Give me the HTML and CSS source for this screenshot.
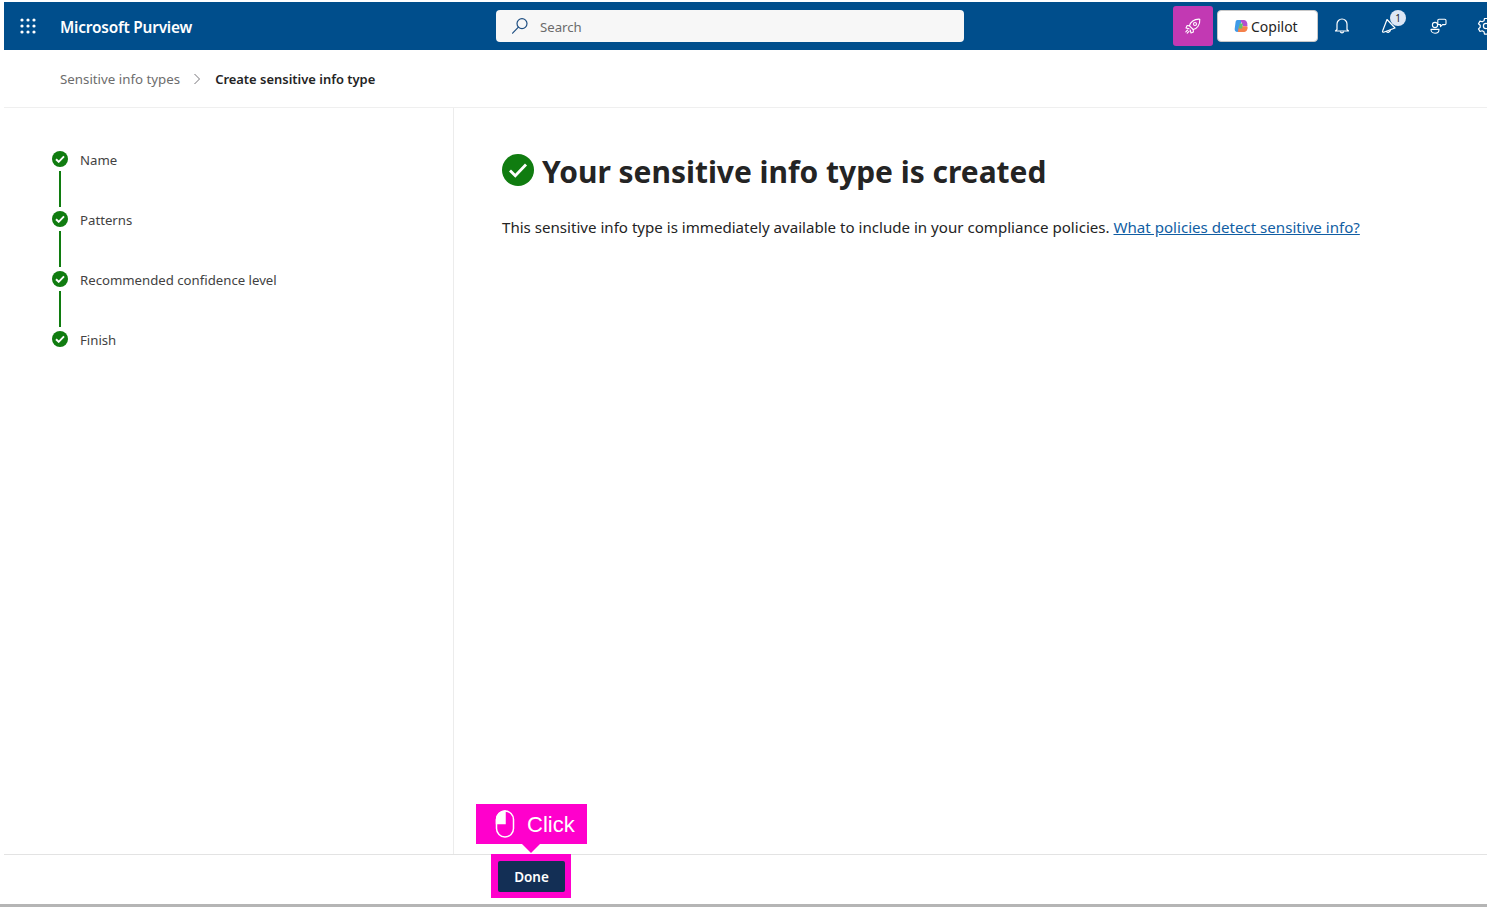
FILE: index.html
```html
<!DOCTYPE html>
<html>

<head>
    <meta charset='utf-8'>
    <title>Microsoft Purview</title>
    <link rel="stylesheet" href="styles.css">
</head>

<body>
    <div id="page">
        <header class="topbar">
            <div class="brand">
                <svg class="waffle" width="16" height="16" viewBox="0 0 16 16" fill="#fff">
                    <circle cx="2" cy="2" r="1.6" /><circle cx="8" cy="2" r="1.6" /><circle cx="14" cy="2" r="1.6" />
                    <circle cx="2" cy="8" r="1.6" /><circle cx="8" cy="8" r="1.6" /><circle cx="14" cy="8" r="1.6" />
                    <circle cx="2" cy="14" r="1.6" /><circle cx="8" cy="14" r="1.6" /><circle cx="14" cy="14" r="1.6" />
                </svg>
                <span class="brand_name">Microsoft Purview</span>
            </div>
            <div class="search">
                <svg width="18" height="18" viewBox="0 0 18 18" fill="none" stroke="#1f4f82" stroke-width="1.2">
                    <circle cx="11" cy="6.6" r="5" />
                    <path d="M7.4 10.2 1.6 16.2" stroke-linecap="round" />
                </svg>
                <span class="search_text">Search</span>
            </div>
            <div class="actions">
                <div class="rocket">
                    <svg width="18" height="18" viewBox="0 0 18 18" fill="none" stroke="#fff" stroke-width="1.1" stroke-linejoin="round" stroke-linecap="round">
                        <path d="M5.500 8.800C6.200 5 10 1.800 15.800 2.200c.4 5.800-2.800 9.600-6.600 10.300z" />
                        <circle cx="11" cy="7" r="1.500" />
                        <path d="M5.500 8.800 3 8.600 2 11l3 .8M9.200 12.500l.2 2.500-2.400 1-.8-3" />
                        <path d="M3.600 13 1.800 14.800M5 14.400 3.200 16.200" />
                    </svg>
                </div>
                <div class="copilot">
                    <svg width="14" height="14" viewBox="0 0 14 14">
                        <path d="M3.400 1h4.200L5.200 11.600C5 12.600 4.200 13 3.300 13 1.500 13 .4 11.600.7 9.800L1.600 3C1.800 1.800 2.400 1 3.400 1z" fill="#3f9be8" />
                        <path d="M6.500 1h3.300c1.800 0 3.200 1.300 3.400 3.200l.3 3.200L8.800 7z" fill="#b44fd0" />
                        <path d="M5 7.200h7c1.400 0 2 1.200 1.500 2.500l-.4 1.100C12.700 12.100 11.600 13 10.200 13H3.800z" fill="#f5814b" />
                        <path d="M5.800 4.600h3.200L8 9.400H4.800z" fill="#5fc36c" />
                    </svg>
                    <span>Copilot</span>
                </div>
                <button class="icon_btn">
                    <svg width="16" height="18" viewBox="0 0 16 18" fill="none" stroke="#fff" stroke-width="1.2" stroke-linejoin="round">
                        <path d="M3 12.500V7a5 5 0 0 1 10 0v5.500l1.500 1.500h-13z" />
                        <path d="M6.200 14.500a1.900 1.900 0 0 0 3.600 0" />
                    </svg>
                </button>
                <button class="icon_btn news">
                    <svg width="18" height="18" viewBox="0 0 18 18" fill="none" stroke="#fff" stroke-width="1.2" stroke-linejoin="round">
                        <path d="M6 2.500 14 11 2.600 15.200c-.8.200-1.300-.500-1-1.200z" />
                        <path d="M5 14.200a2.400 2.400 0 0 0 4.400-1.400" />
                    </svg>
                    <span class="badge">1</span>
                </button>
                <button class="icon_btn">
                    <svg width="18" height="18" viewBox="0 0 18 18" fill="none" stroke="#fff" stroke-width="1.1" stroke-linejoin="round">
                        <circle cx="6" cy="8" r="2.600" />
                        <path d="M2 12.400h8c0 2.400-1.700 3.800-4 3.800s-4-1.400-4-3.800z" />
                        <path d="M10 2.200h5.800c.7 0 1.200.5 1.200 1.200v3c0 .7-.5 1.200-1.200 1.200h-2.300l-2 2V7.600H10c-.7 0-1.200-.5-1.200-1.200v-3c0-.7.500-1.200 1.200-1.200z" />
                    </svg>
                </button>
                <button class="icon_btn">
                    <svg width="18" height="18" viewBox="0 0 18 18" fill="none" stroke="#fff" stroke-width="1.200" stroke-linejoin="round">
                        <circle cx="9" cy="9" r="2.600" />
                        <path d="M7.500 1.500h3l.5 2.300 1.800 1 2.200-.7 1.500 2.600-1.700 1.600v2l1.700 1.600-1.500 2.600-2.200-.7-1.800 1-.5 2.300h-3l-.5-2.300-1.800-1-2.200.7-1.500-2.600 1.700-1.600v-2L1.500 6.700 3 4.100l2.200.7 1.800-1z" />
                    </svg>
                </button>
            </div>
        </header>

        <nav class="crumbs">
            <span class="crumb_link">Sensitive info types</span>
            <svg width="8" height="12" viewBox="0 0 8 12" fill="none" stroke="#77757a" stroke-width="1">
                <path d="M1.500 1 6.500 6 1.500 11" />
            </svg>
            <span class="crumb_current">Create sensitive info type</span>
        </nav>

        <div class="content">
            <aside class="steps">
                <div class="step">
                    <span class="step_dot"><svg width="10" height="8" viewBox="0 0 10 8"><path d="M1 4.200 3.700 6.800 9 1.300" /></svg></span>
                    <span class="step_label">Name</span>
                </div>
                <div class="step_line"></div>
                <div class="step">
                    <span class="step_dot"><svg width="10" height="8" viewBox="0 0 10 8"><path d="M1 4.200 3.700 6.800 9 1.300" /></svg></span>
                    <span class="step_label">Patterns</span>
                </div>
                <div class="step_line"></div>
                <div class="step">
                    <span class="step_dot"><svg width="10" height="8" viewBox="0 0 10 8"><path d="M1 4.200 3.700 6.800 9 1.300" /></svg></span>
                    <span class="step_label">Recommended confidence level</span>
                </div>
                <div class="step_line"></div>
                <div class="step">
                    <span class="step_dot"><svg width="10" height="8" viewBox="0 0 10 8"><path d="M1 4.200 3.700 6.800 9 1.300" /></svg></span>
                    <span class="step_label">Finish</span>
                </div>
            </aside>
            <main class="result">
                <div class="result_head">
                    <span class="result_dot"><svg width="20" height="16" viewBox="0 0 20 16"><path d="M2 8.500 7.300 13.800 18 2.500" /></svg></span>
                    <h1>Your sensitive info type is created</h1>
                </div>
                <p>This sensitive info type is immediately available to include in your compliance policies. <a href="#">What policies detect sensitive info?</a></p>
            </main>
        </div>

        <footer class="bottom">
            <div class="done_mark">
                <button class="done">Done</button>
            </div>
            <div class="callout">
                <svg width="20" height="28" viewBox="0 0 20 28" fill="none" stroke="#fff" stroke-width="1.500">
                    <rect x="1.500" y="1" width="17" height="26" rx="8.500" />
                    <path d="M1.500 13.500V9.500A8.500 8.500 0 0 1 10 1V13.500z" fill="#fff" />
                </svg>
                <span class="callout_text">Click</span>
            </div>
        </footer>
    </div>
</body>

</html>
```

FILE: styles.css
```css
* {
    box-sizing: border-box;
}

html,
body {
    margin: 0;
    padding: 0;
    height: 100%;
    width: 100%;
    overflow: hidden;
    background-color: white;
}

body {
    font-family: "Noto Sans", "Open Sans", sans-serif;
    font-size: 14px;
    color: #242424;
}

#page {
    display: flex;
    flex-direction: column;
    height: 100%;
    padding: 2px 0 3px 4px;
    position: relative;
}

#page::after {
    content: "";
    position: absolute;
    left: 0;
    right: 0;
    bottom: 0;
    height: 3px;
    background-color: #b5b5b5;
}

/* top bar */
.topbar {
    flex: 0 0 48px;
    display: flex;
    align-items: center;
    background-color: #004e8c;
    color: white;
    position: relative;
}

.brand {
    flex: 0 0 492px;
    display: flex;
    align-items: center;
    padding-left: 16px;
    gap: 24px;
}

.brand_name {
    padding-top: 2px;
    font-size: 15.400px;
    font-weight: 600;
    letter-spacing: -0.2px;
}

.search {
    flex: 0 0 468px;
    height: 32px;
    display: flex;
    align-items: center;
    gap: 11px;
    padding-left: 15px;
    background-color: #f7f7f7;
    border-radius: 4px;
    color: #6b6b6b;
    font-size: 13.200px;
}

.search_text {
    padding-top: 2px;
}

.actions {
    margin-left: auto;
    display: flex;
    align-items: center;
    width: 314px;
    flex-shrink: 0;
}

.rocket {
    flex: 0 0 40px;
    height: 40px;
    display: flex;
    align-items: center;
    justify-content: center;
    background-color: #c239b3;
    border-radius: 3px;
}

.copilot {
    flex: 0 0 101px;
    height: 32px;
    margin-left: 4px;
    padding-left: 16px;
    display: flex;
    align-items: center;
    gap: 3px;
    background-color: white;
    border: 1px solid #c8c8c8;
    border-radius: 4px;
    color: #242424;
    font-size: 14px;
}

.icon_btn {
    flex: 0 0 48px;
    height: 48px;
    padding: 0;
    display: flex;
    align-items: center;
    justify-content: center;
    background: none;
    border: none;
    position: relative;
}

.news .badge {
    position: absolute;
    top: 8px;
    left: 24px;
    width: 16px;
    height: 16px;
    border-radius: 50%;
    background-color: #dce6f5;
    color: #242424;
    font-family: "Noto Sans", sans-serif;
    font-size: 10px;
    line-height: 16px;
    text-align: center;
}

/* breadcrumb */
.crumbs {
    flex: 0 0 58px;
    display: flex;
    align-items: center;
    padding-left: 56px;
    gap: 13px;
    border-bottom: 1px solid #efefef;
}

.crumb_link {
    color: #6d6d6d;
    font-size: 13.300px;
}

.crumb_current {
    margin-left: 1px;
    font-weight: 600;
    font-size: 12.950px;
}

/* main area */
.content {
    flex: 1 1 0;
    display: flex;
}

.steps {
    flex: 0 0 450px;
    padding: 42px 0 0 48px;
    border-right: 1px solid #ececec;
    font-size: 13.200px;
    color: #424242;
}

.step {
    display: flex;
    align-items: center;
    gap: 12px;
    height: 18px;
}

.step_label {
    padding-top: 1px;
}

.step_dot {
    flex: 0 0 16px;
    height: 16px;
    display: flex;
    align-items: center;
    justify-content: center;
    border-radius: 50%;
    background-color: #107c10;
}

.step_dot svg path,
.result_dot svg path {
    fill: none;
    stroke: white;
    stroke-width: 1.900;
}

.step_line {
    width: 2px;
    height: 36px;
    margin: 3px 0 3px 7px;
    background-color: #107c10;
}

.result {
    flex: 1 1 0;
    padding: 45px 0 0 48px;
}

.result_head {
    display: flex;
    align-items: center;
    gap: 8px;
}

.result_dot {
    flex: 0 0 32px;
    height: 32px;
    margin-bottom: 4px;
    display: flex;
    align-items: center;
    justify-content: center;
    border-radius: 50%;
    background-color: #107c10;
}

.result_dot svg path {
    stroke-width: 2.800;
}

h1 {
    margin: 0;
    font-size: 29.950px;
    line-height: 38px;
    font-weight: 700;
    color: #242424;
}

.result p {
    margin: 25px 0 0;
    font-size: 15.100px;
    line-height: 22px;
}

.result a {
    color: #115ea3;
}

/* footer */
.bottom {
    flex: 0 0 50px;
    border-top: 1px solid #e3e3e3;
    position: relative;
}

.done_mark {
    position: absolute;
    left: 487px;
    top: -1px;
    width: 80px;
    height: 44px;
    display: flex;
    align-items: center;
    justify-content: center;
    background-color: #ff00cc;
}

.done {
    width: 67px;
    height: 31px;
    padding: 1px 0 0 1px;
    border: none;
    border-radius: 2px;
    background-color: #132f55;
    color: white;
    font-family: inherit;
    font-size: 13.500px;
    font-weight: 600;
}

.callout {
    position: absolute;
    left: 472px;
    top: -51px;
    width: 111px;
    height: 40px;
    display: flex;
    align-items: center;
    gap: 12px;
    padding-left: 19px;
    background-color: #ff00cc;
    color: white;
    font-family: "Liberation Sans", sans-serif;
    font-size: 22px;
}

.callout_text {
    padding-top: 1px;
}

.callout::after {
    content: "";
    position: absolute;
    left: 46px;
    bottom: -9px;
    border-left: 9px solid transparent;
    border-right: 9px solid transparent;
    border-top: 9px solid #ff00cc;
}
```
